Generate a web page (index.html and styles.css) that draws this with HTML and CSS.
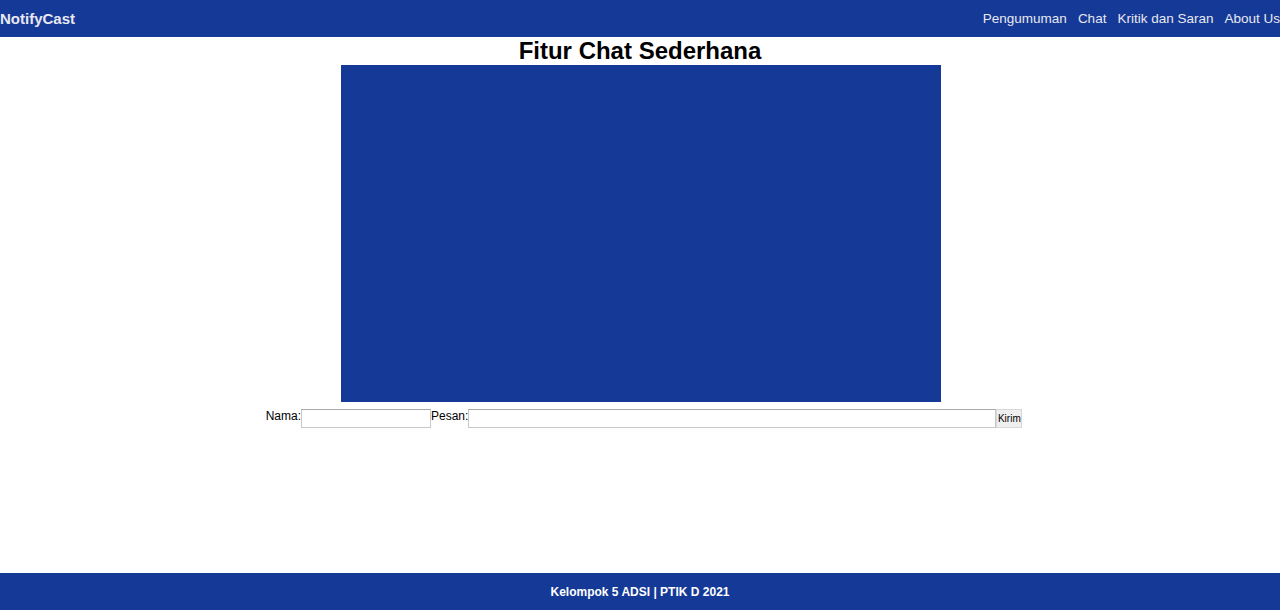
FILE: index.html
```html
<!DOCTYPE html>
<html lang="id">
<head>
<meta charset="utf-8">
<title>NotifyCast - Chat</title>
<link rel="stylesheet" href="styles.css">
</head>
<body>
<header class="topbar">
  <div class="brand">NotifyCast</div>
  <nav class="nav">
    <a href="#">Pengumuman</a>
    <a href="#">Chat</a>
    <a href="#">Kritik dan Saran</a>
    <a href="#">About Us</a>
  </nav>
</header>
<main class="main">
  <h2 class="title">Fitur Chat Sederhana</h2>
  <div class="chatbox"></div>
  <form class="chatform">
    <label class="lbl">Nama:</label><input class="inp inp-name" type="text"><label class="lbl">Pesan:</label><input class="inp inp-msg" type="text"><button class="btn" type="button">Kirim</button>
  </form>
</main>
<footer class="footer">Kelompok 5 ADSI | PTIK D 2021</footer>
</body>
</html>
```
FILE: styles.css
```css
html, body {
  margin: 0;
  padding: 0;
  height: 100%;
}
body {
  font-family: "Liberation Sans", Arial, sans-serif;
  display: flex;
  flex-direction: column;
  min-height: 610px;
  background: #fff;
}
.topbar {
  background: #153997;
  height: 37px;
  display: flex;
  align-items: center;
  justify-content: space-between;
}
.brand {
  color: #e8e8f0;
  font-weight: bold;
  font-size: 15px;
  line-height: 36px;
}
.nav {
  display: flex;
  gap: 11px;
  line-height: 35px;
}
.nav a {
  color: #e8e8f0;
  text-decoration: none;
  font-size: 13.5px;
}
.main {
  flex: 1;
  display: flex;
  flex-direction: column;
  align-items: center;
}
.title {
  margin: 0;
  font-size: 24px;
  line-height: 28px;
  font-weight: bold;
  color: #000;
}
.chatbox {
  width: 600px;
  height: 337px;
  margin-left: 2px;
  background: #153997;
}
.chatform {
  margin: 7px 0 0 8px;
  display: flex;
  align-items: flex-start;
  font-size: 12px;
}
.lbl {
  line-height: 14px;
  color: #000;
}
.inp {
  box-sizing: border-box;
  height: 19px;
  border: 1px solid #c8c8c8;
  border-top-color: #a8a8a8;
  padding: 0 2px;
  margin: 0;
  font-size: 11px;
}
.inp-name { width: 130px; }
.inp-msg { width: 528px; }
.btn {
  box-sizing: border-box;
  height: 19px;
  width: 26px;
  padding: 0;
  margin: 0;
  border: 1px solid #d8d8d8;
  background: #efefef;
  font-size: 10px;
  font-family: "Liberation Sans", Arial, sans-serif;
  color: #000;
}
.footer {
  background: #153997;
  height: 37px;
  display: flex;
  align-items: center;
  justify-content: center;
  color: #fff;
  font-weight: bold;
  font-size: 12px;
}
```
